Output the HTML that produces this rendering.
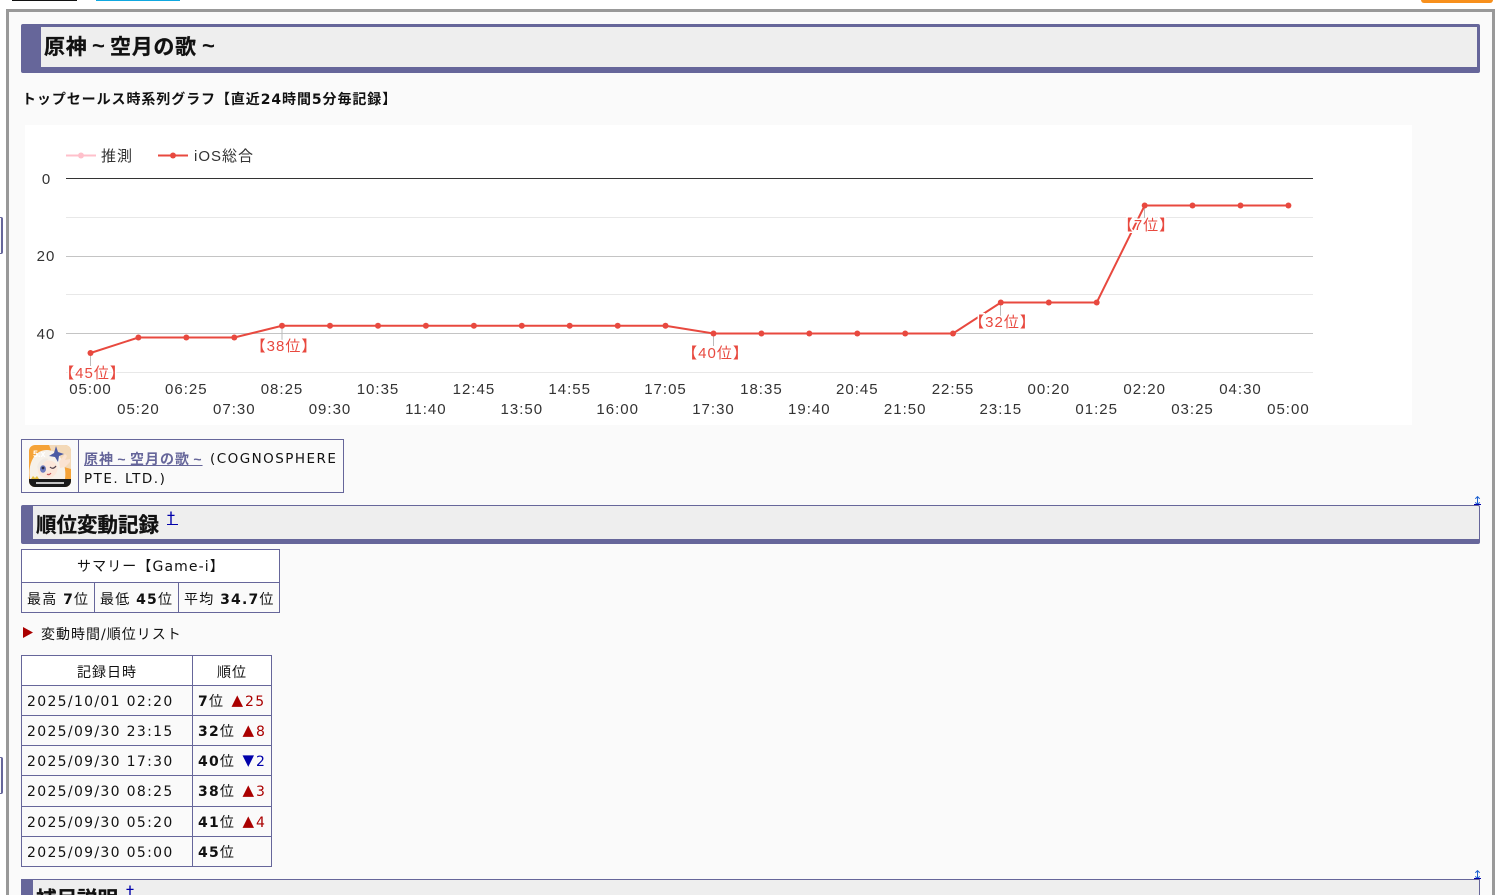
<!DOCTYPE html>
<html lang="ja"><head><meta charset="utf-8"><title>原神</title>
<style>
html,body{margin:0;padding:0;width:1495px;height:895px;overflow:hidden;background:#fff}
body{position:relative;font-family:"DejaVu Sans","Noto Sans CJK JP",sans-serif;font-size:14px;color:#111;letter-spacing:1.2px}
.a{position:absolute;box-sizing:border-box;white-space:nowrap}
.line{position:absolute;background:#66669a}
.t{position:absolute;white-space:nowrap;line-height:20px}
.d{letter-spacing:1.32px}
.r{color:#a00}.b{color:#00a}
.tri{font-size:15px;letter-spacing:0;margin-top:-2px}
b{font-weight:bold}
a{color:#66669a}
.h{font-weight:bold;font-family:'Noto Sans CJK JP',sans-serif;color:#111;-webkit-text-stroke:.3px #111}
.til{font-family:'Liberation Sans',sans-serif;font-weight:bold}
.arr{font-size:12px;color:#1a5fd0;letter-spacing:0}
</style></head><body>
<div class="a" style="left:12px;top:0;width:65px;height:1px;background:#111"></div>
<div class="a" style="left:96px;top:0;width:84px;height:1px;background:#10a8e0"></div>
<div class="a" style="left:1421px;top:0;width:72px;height:3px;background:#f8901c;border-radius:0 0 3px 3px"></div>
<div class="a" style="left:0;top:217px;width:3px;height:37px;border:solid #66669a;border-width:1px 2px 1px 0;border-radius:0 2px 2px 0;background:#fafafa"></div>
<div class="a" style="left:0;top:757px;width:3px;height:37px;border:solid #66669a;border-width:1px 2px 1px 0;border-radius:0 2px 2px 0;background:#fafafa"></div>
<div class="a" style="left:6px;top:9px;width:1489px;height:900px;border:3px solid #999;background:#fafafa"></div>

<div class="a" style="left:21px;top:24px;width:1459px;height:49px;background:#eee;border:solid #66669a;border-width:3px 3px 6px 20px;border-radius:2px"></div>
<div class="t h" style="left:44px;top:31px;font-size:21px;line-height:30px;letter-spacing:.7px">原神</div>
<div class="t til" style="left:92px;top:31px;font-size:22px;line-height:30px;letter-spacing:0">~</div>
<div class="t h" style="left:110px;top:31px;font-size:21px;line-height:30px;letter-spacing:.7px">空月の歌</div>
<div class="t til" style="left:202px;top:31px;font-size:22px;line-height:30px;letter-spacing:0">~</div>
<div class="t" style="left:22px;top:90px;font-size:14px;font-weight:bold;letter-spacing:.92px">トップセールス時系列グラフ【直近24時間5分毎記録】</div>

<svg class="a" style="left:25px;top:125px" width="1387" height="300" viewBox="25 125 1387 300" font-family="'Liberation Sans','Noto Sans CJK JP',sans-serif" font-size="15">
<rect x="25" y="125" width="1387" height="300" fill="#fff"/>
<g stroke-width="1" shape-rendering="crispEdges">
<path d="M66 217.5H1313M66 294.5H1313M66 372.5H1313" stroke="#e8e8e8"/>
<path d="M66 256.5H1313M66 333.5H1313" stroke="#c4c4c4"/>
<path d="M66 178.5H1313" stroke="#333"/>
<path d="M90.5 353V366M282 326V340M713.5 334V346M1000.5 303V316M1144.5 206V218" stroke="#bbb"/>
</g>
<g letter-spacing="1" fill="#333">
<text x="46" y="184" text-anchor="middle" letter-spacing="0">0</text>
<text x="46" y="261" text-anchor="middle">20</text>
<text x="46" y="339" text-anchor="middle">40</text>
</g>
<path d="M66 155.500H96" stroke="#ffc0cb" stroke-width="2"/><circle cx="81" cy="155.500" r="3" fill="#ffc0cb"/>
<text x="101" y="161" fill="#333" letter-spacing="1">推測</text>
<path d="M158 155.500H188" stroke="#e8493f" stroke-width="2"/><circle cx="173" cy="155.500" r="3" fill="#e8493f"/>
<text x="194" y="161" fill="#333" letter-spacing="1">iOS総合</text>
<polyline fill="none" stroke="#e8493f" stroke-width="2" points="90.500,353 138.400,337.500 186.300,337.500 234.300,337.500 282,325.800 330,325.800 378,325.800 425.900,325.800 473.900,325.800 521.800,325.800 569.700,325.800 617.700,325.800 665.500,325.800 713.500,333.500 761.400,333.500 809.300,333.500 857.300,333.500 905.200,333.500 953,333.500 1000.800,302.500 1048.800,302.500 1096.700,302.500 1144.700,205.500 1192.500,205.500 1240.500,205.500 1288.400,205.500"/>
<g fill="#e8493f"><circle cx="90.500" cy="353" r="3"/><circle cx="138.400" cy="337.500" r="3"/><circle cx="186.300" cy="337.500" r="3"/><circle cx="234.300" cy="337.500" r="3"/><circle cx="282" cy="325.800" r="3"/><circle cx="330" cy="325.800" r="3"/><circle cx="378" cy="325.800" r="3"/><circle cx="425.900" cy="325.800" r="3"/><circle cx="473.900" cy="325.800" r="3"/><circle cx="521.800" cy="325.800" r="3"/><circle cx="569.700" cy="325.800" r="3"/><circle cx="617.700" cy="325.800" r="3"/><circle cx="665.500" cy="325.800" r="3"/><circle cx="713.500" cy="333.500" r="3"/><circle cx="761.400" cy="333.500" r="3"/><circle cx="809.300" cy="333.500" r="3"/><circle cx="857.300" cy="333.500" r="3"/><circle cx="905.200" cy="333.500" r="3"/><circle cx="953" cy="333.500" r="3"/><circle cx="1000.800" cy="302.500" r="3"/><circle cx="1048.800" cy="302.500" r="3"/><circle cx="1096.700" cy="302.500" r="3"/><circle cx="1144.700" cy="205.500" r="3"/><circle cx="1192.500" cy="205.500" r="3"/><circle cx="1240.500" cy="205.500" r="3"/><circle cx="1288.400" cy="205.500" r="3"/></g>
<g fill="#e8493f" text-anchor="middle" stroke="#fff" stroke-width="3" paint-order="stroke" letter-spacing="1">
<text x="92.500" y="378">【45位】</text>
<text x="284" y="351">【38位】</text>
<text x="715.500" y="358">【40位】</text>
<text x="1002.500" y="327">【32位】</text>
<text x="1146.500" y="230">【7位】</text>
</g>
<g fill="#333" text-anchor="middle" letter-spacing="1">
<text x="90.500" y="394">05:00</text><text x="186.300" y="394">06:25</text><text x="282" y="394">08:25</text><text x="378" y="394">10:35</text><text x="473.900" y="394">12:45</text><text x="569.700" y="394">14:55</text><text x="665.500" y="394">17:05</text><text x="761.400" y="394">18:35</text><text x="857.300" y="394">20:45</text><text x="953" y="394">22:55</text><text x="1048.800" y="394">00:20</text><text x="1144.700" y="394">02:20</text><text x="1240.500" y="394">04:30</text>
<text x="138.400" y="414">05:20</text><text x="234.300" y="414">07:30</text><text x="330" y="414">09:30</text><text x="425.900" y="414">11:40</text><text x="521.800" y="414">13:50</text><text x="617.700" y="414">16:00</text><text x="713.500" y="414">17:30</text><text x="809.300" y="414">19:40</text><text x="905.200" y="414">21:50</text><text x="1000.800" y="414">23:15</text><text x="1096.700" y="414">01:25</text><text x="1192.500" y="414">03:25</text><text x="1288.400" y="414">05:00</text>
</g>
</svg>

<!-- app box -->
<div class="a" style="left:21px;top:439px;width:323px;height:54px;border:1px solid #66669a"></div>
<div class="line" style="left:78px;top:439px;width:1px;height:54px"></div>
<svg class="a" style="left:29px;top:445px" width="42" height="42" viewBox="0 0 42 42">
<defs><clipPath id="c"><rect width="42" height="42" rx="6"/></clipPath></defs>
<g clip-path="url(#c)">
<rect width="42" height="42" fill="#f5a338"/>
<path d="M20 0H42V24L28 20Z" fill="#f3d9b8"/>
<path d="M1 34C-1 24 2 12 10 7C17 3 27 5 31 12C36 18 37 27 36 34Z" fill="#f6f1ea"/>
<path d="M9 22C10 14 24 13 28 20C30 28 25 33 18 33C12 33 8 29 9 22Z" fill="#fce7da"/>
<path d="M8 22C10 15 15 12 20 14C16 16 12 20 10 26Z" fill="#f0eae4"/>
<ellipse cx="14" cy="24" rx="3" ry="3.800" fill="#6f7cc0"/><circle cx="14" cy="23" r="1.400" fill="#2b2b4c"/>
<path d="M21 22Q24 25 27 21" stroke="#50404c" stroke-width="1.200" fill="none"/>
<path d="M18 29Q20 31 22 28" stroke="#c05050" stroke-width="1" fill="#e99"/>
<path d="M27 1L29 7L35 9L30 11L29 17L26 12L20 11L25 8Z" fill="#4a5aa4"/>
<path d="M30 17L36 9L38 11L36 15L41 14L41 17L36 22L31 23Z" fill="#fbe3d2"/>
<text x="4" y="12" font-family="'Liberation Sans',sans-serif" font-size="9" font-weight="bold" fill="#fff" letter-spacing="0">5.x</text>
<rect y="34" width="42" height="8" fill="#1a1a1a"/>
<rect x="7" y="37" width="28" height="2" fill="#c4c4c4"/>
<path d="M2 34L4 31L6 33L8 31L10 34Z" fill="#e6c040"/>
</g></svg>
<div class="t" style="left:84px;top:449px;font-size:14px;letter-spacing:1px;word-spacing:-1.5px"><a href="#" style="font-weight:bold">原神<span class="til"> ~ </span>空月の歌<span class="til"> ~ </span></a></div>
<div class="t" style="left:210px;top:449px;font-size:13.500px;letter-spacing:1.46px">(COGNOSPHERE</div>
<div class="t" style="left:84px;top:469px;font-size:13.500px;letter-spacing:1.5px">PTE. LTD.)</div>

<!-- h2 -->
<div class="a" style="left:21px;top:505px;width:1459px;height:39px;background:#eee;border:solid #66669a;border-width:1px 1px 5px 12px;border-radius:2px"></div>
<div class="t h" style="left:36px;top:508px;font-size:20.500px;line-height:30px;letter-spacing:0">順位変動記録</div>
<div class="t" style="left:167px;top:508px;font-size:16px;color:#00a;text-decoration:underline;letter-spacing:3px">†</div>
<div class="t arr" style="left:1472.500px;top:491px">↕</div>
<div class="a" style="left:1474px;top:504px;width:7px;height:1px;background:#00a"></div>

<!-- summary -->
<div class="a" style="left:21px;top:549px;width:259px;height:64px;border:1px solid #66669a;background:#fff"></div>
<div class="line" style="left:21px;top:582px;width:259px;height:1px"></div>
<div class="a" style="left:22px;top:583px;width:257px;height:29px;background:#fafafa"></div>
<div class="line" style="left:94px;top:582px;width:1px;height:30px"></div>
<div class="line" style="left:178px;top:582px;width:1px;height:30px"></div>
<div class="t" style="left:77px;top:557px;font-size:14px;letter-spacing:1.1px">サマリー【Game-i】</div>
<div class="t" style="left:27px;top:590px">最高 <b>7</b>位</div>
<div class="t" style="left:100px;top:590px">最低 <b>45</b>位</div>
<div class="t" style="left:184px;top:590px">平均 <b>34.7</b>位</div>

<div class="a" style="left:23px;top:627px;width:10px;height:11px;background:#a00;clip-path:polygon(0 0,100% 50%,0 100%)"></div>
<div class="t" style="left:41px;top:625px;letter-spacing:1px">変動時間/順位リスト</div>

<!-- record table -->
<div class="a" style="left:21px;top:655px;width:251px;height:212px;border:1px solid #66669a"></div>
<div class="a" style="left:22px;top:656px;width:249px;height:29px;background:#fff"></div>
<div class="line" style="left:192px;top:655px;width:1px;height:212px"></div>
<div class="line" style="left:21px;top:685px;width:251px;height:1px"></div>
<div class="line" style="left:21px;top:715px;width:251px;height:1px"></div>
<div class="line" style="left:21px;top:745px;width:251px;height:1px"></div>
<div class="line" style="left:21px;top:775px;width:251px;height:1px"></div>
<div class="line" style="left:21px;top:806px;width:251px;height:1px"></div>
<div class="line" style="left:21px;top:836px;width:251px;height:1px"></div>
<div class="t" style="left:77px;top:663px;letter-spacing:1px">記録日時</div>
<div class="t" style="left:217px;top:663px;letter-spacing:1px">順位</div>

<div class="t d" style="left:27px;top:692px">2025/10/01 02:20</div><div class="t" style="left:198px;top:692px"><b>7</b>位</div><div class="t r tri" style="left:231.500px;top:692px">▲</div><div class="t r d" style="left:245px;top:692px">25</div>
<div class="t d" style="left:27px;top:722px">2025/09/30 23:15</div><div class="t" style="left:198px;top:722px"><b>32</b>位</div><div class="t r tri" style="left:242.500px;top:722px">▲</div><div class="t r d" style="left:256px;top:722px">8</div>
<div class="t d" style="left:27px;top:752px">2025/09/30 17:30</div><div class="t" style="left:198px;top:752px"><b>40</b>位</div><div class="t b tri" style="left:242.500px;top:752px">▼</div><div class="t b d" style="left:256px;top:752px">2</div>
<div class="t d" style="left:27px;top:782px">2025/09/30 08:25</div><div class="t" style="left:198px;top:782px"><b>38</b>位</div><div class="t r tri" style="left:242.500px;top:782px">▲</div><div class="t r d" style="left:256px;top:782px">3</div>
<div class="t d" style="left:27px;top:813px">2025/09/30 05:20</div><div class="t" style="left:198px;top:813px"><b>41</b>位</div><div class="t r tri" style="left:242.500px;top:813px">▲</div><div class="t r d" style="left:256px;top:813px">4</div>
<div class="t d" style="left:27px;top:843px">2025/09/30 05:00</div><div class="t" style="left:198px;top:843px"><b>45</b>位</div>

<!-- h2 bottom -->
<div class="a" style="left:21px;top:879px;width:1459px;height:39px;background:#eee;border:solid #66669a;border-width:1px 1px 5px 12px"></div>
<div class="t h" style="left:36px;top:882px;font-size:20.500px;line-height:30px;letter-spacing:0">補足説明</div>
<div class="t" style="left:126px;top:882px;font-size:16px;color:#00a;text-decoration:underline;letter-spacing:3px">†</div>
<div class="t arr" style="left:1472.500px;top:865px">↕</div>
<div class="a" style="left:1474px;top:878px;width:7px;height:1px;background:#00a"></div>
</body></html>
